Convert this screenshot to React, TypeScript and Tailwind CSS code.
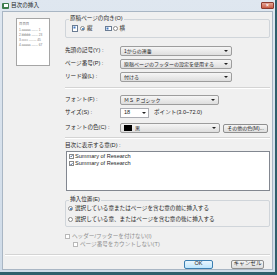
import React from "react";

const jp = "font-['Liberation_Sans','Noto_Sans_CJK_JP',sans-serif]";

function Combo({ text, w, swatch }: { text: string; w: string; swatch?: boolean }) {
  return (
    <div
      className={`flex h-[10px] items-center rounded-[2px] border border-[#9d9d9d] bg-gradient-to-b from-[#f6f6f6] to-[#dedede] pl-[3px] pr-[3px] ${w}`}
    >
      {swatch && <span className="mr-[3px] h-[6px] w-[8px] bg-black" />}
      <span className="flex-1 truncate text-[5px] leading-none">{text}</span>
      <span className="ml-[2px] h-0 w-0 border-x-[2px] border-t-[2px] border-x-transparent border-t-[#222]" />
    </div>
  );
}

function Radio({ on }: { on?: boolean }) {
  return (
    <span className="flex h-[5px] w-[5px] items-center justify-center rounded-full border border-[#8a8a8a] bg-white">
      {on && <span className="h-[2px] w-[2px] rounded-full bg-[#2a6bb0]" />}
    </span>
  );
}

function Check({ on, dim }: { on?: boolean; dim?: boolean }) {
  return (
    <span
      className={`flex h-[5px] w-[5px] items-center justify-center border bg-white ${
        dim ? "border-[#b8b8b8]" : "border-[#8a8a8a]"
      }`}
    >
      {on && (
        <svg width="4" height="4" viewBox="0 0 4 4">
          <path d="M0.5 2 L1.6 3.2 L3.6 0.6" stroke="#2b4f8c" strokeWidth="0.9" fill="none" />
        </svg>
      )}
    </span>
  );
}

function PageIcon({ wide }: { wide?: boolean }) {
  return (
    <svg width={wide ? 7 : 6} height={wide ? 5 : 7} viewBox={wide ? "0 0 7 5" : "0 0 6 7"}>
      <rect x="0.5" y="0.5" width={wide ? 6 : 5} height={wide ? 4 : 6} fill="#fff" stroke="#6a7c93" />
      <rect x="1.5" y="1.5" width="2" height="2" fill="#3f78c4" />
    </svg>
  );
}

function Row({ label, children }: { label: string; children: React.ReactNode }) {
  return (
    <div className="flex h-[10px] items-center">
      <span className="w-[55px] leading-none">{label}</span>
      {children}
    </div>
  );
}

export default function App() {
  return (
    <div className={`h-[275px] w-[277px] bg-[#2f5f6c] text-[5.6px] text-[#1e1e1e] ${jp}`}>
      <div className="flex h-[272px] w-[275px] flex-col bg-gradient-to-b from-[#dfe7f0] to-[#cfdbe8]">
        <div className="flex h-[11px] items-center pl-[2px]">
          <span className="flex h-[6px] w-[7px] items-center justify-center rounded-[1px] bg-[#3d7d4e]">
            <span className="h-[3px] w-[4px] bg-white" />
          </span>
          <span className="ml-[2px] text-[5.6px] leading-none text-[#222]">目次の挿入</span>
          <span className="ml-auto mr-[1px] flex h-[7px] w-[13px] items-center justify-center rounded-[1px] border border-[#8c3b30] bg-gradient-to-b from-[#e4a393] to-[#c75b44] text-[5px] font-bold leading-none text-white">
            ×
          </span>
        </div>
        <div className="mx-[2px] mb-[2px] flex flex-1 flex-col border border-[#a9b6c4] bg-[#f0f0f0]">
          <div className="flex">
            <div className="ml-[13px] mt-[6px] flex h-[48px] w-[34px] flex-col border border-[#a5a5a5] bg-white px-[2px] pt-[3px] text-[3.2px] leading-[5px] text-[#7a7a7a]">
              <span className="text-[3.4px]">目目目</span>
              <span className="mt-[1px]">1.aaaaa ------ 1</span>
              <span>2.bbbbb ------ 23</span>
              <span>3.cccc ------- 45</span>
              <span>4.aaaaa ------ 67</span>
            </div>
            <div className="ml-[15px] mr-[2px] flex flex-1 flex-col">
              <div className="relative mt-[7px] flex h-[19px] items-center rounded-[2px] border border-[#d0d5da] pl-[6px]">
                <span className="absolute -top-[4px] left-[3px] bg-[#f0f0f0] px-[1px] leading-none">
                  原稿ページの向き(O)
                </span>
                <PageIcon />
                <span className="ml-[2px]"><Radio on /></span>
                <span className="ml-[2px] leading-none">縦</span>
                <span className="ml-[12px]"><PageIcon wide /></span>
                <span className="ml-[1px]"><Radio /></span>
                <span className="ml-[2px] leading-none">横</span>
              </div>
              <div className="mt-[8px] flex flex-col gap-[3px]">
                <Row label="先頭の記号(Y) :">
                  <Combo text="1からの連番" w="w-[112px]" />
                </Row>
                <Row label="ページ番号(P) :">
                  <Combo text="原稿ページのフッターの設定を使用する" w="w-[112px]" />
                </Row>
                <Row label="リード線(L) :">
                  <Combo text="付ける" w="w-[112px]" />
                </Row>
              </div>
              <div className="mt-[5px] h-[2px] border-t border-b border-t-[#d4d4d4] border-b-white" />
              <div className="mt-[6px]">
                <Row label="フォント(F) :">
                  <Combo text="ＭＳ Ｐゴシック" w="w-[99px]" />
                </Row>
              </div>
              <div className="mt-[3px]">
                <Row label="サイズ(S) :">
                  <div className="flex h-[10px] w-[29px] items-center border border-[#abadb3] bg-white pl-[3px] pr-[2px]">
                    <span className="flex-1 leading-none">18</span>
                    <span className="h-0 w-0 border-x-[2px] border-t-[2px] border-x-transparent border-t-[#222]" />
                  </div>
                  <span className="ml-[5px] leading-none">ポイント(3.0~72.0)</span>
                </Row>
              </div>
              <div className="mt-[5px]">
                <Row label="フォントの色(C) :">
                  <Combo text="黒" w="w-[100px]" swatch />
                  <div className="ml-[3px] flex h-[9px] w-[45px] items-center justify-center rounded-[2px] border border-[#8f8f8f] bg-gradient-to-b from-[#f6f6f6] to-[#dddddd] text-[5px] leading-none">
                    その他の色(M)...
                  </div>
                </Row>
              </div>
              <div className="mt-[4px] h-[2px] border-t border-b border-t-[#d4d4d4] border-b-white" />
              <span className="mt-[4px] leading-none">目次に表示する章(D) :</span>
              <div className="ml-[1px] mt-[2px] flex h-[40px] flex-col gap-[2px] border border-[#828790] bg-white pl-[2px] pt-[2px]">
                <div className="flex items-center gap-[1px]">
                  <Check on />
                  <span className="leading-none">Summary of Research</span>
                </div>
                <div className="flex items-center gap-[1px]">
                  <Check on />
                  <span className="leading-none">Summary of Research</span>
                </div>
              </div>
              <div className="relative mt-[9px] flex h-[27px] flex-col justify-center gap-[5px] rounded-[2px] border border-[#d0d5da] pl-[2px] pt-[2px]">
                <span className="absolute -top-[4px] left-[3px] bg-[#f0f0f0] px-[1px] leading-none">
                  挿入位置(E)
                </span>
                <div className="flex items-center gap-[2px]">
                  <Radio on />
                  <span className="leading-none">選択している章またはページを含む章の前に挿入する</span>
                </div>
                <div className="flex items-center gap-[2px]">
                  <Radio />
                  <span className="leading-none">選択している章、またはページを含む章の後に挿入する</span>
                </div>
              </div>
              <div className="mt-[7px] flex items-center gap-[2px] text-[#8d8d8d]">
                <Check dim />
                <span className="leading-none">ヘッダー/フッターを付けない(I)</span>
              </div>
              <div className="ml-[8px] mt-[3px] flex items-center gap-[2px] text-[#8d8d8d]">
                <Check dim />
                <span className="leading-none">ページ番号をカウントしない(T)</span>
              </div>
            </div>
          </div>
          <div className="mx-[2px] mt-[6px] h-[2px] border-t border-b border-t-[#d4d4d4] border-b-white" />
          <div className="mr-[8px] mt-[4px] flex justify-end gap-[18px]">
            <div className="flex h-[9px] w-[29px] items-center justify-center rounded-[2px] border border-[#3c7fb1] bg-gradient-to-b from-[#eaf6fd] to-[#bee6fd] leading-none">
              OK
            </div>
            <div className="flex h-[9px] w-[33px] items-center justify-center rounded-[2px] border border-[#8f8f8f] bg-gradient-to-b from-[#f6f6f6] to-[#dddddd] leading-none">
              キャンセル
            </div>
          </div>
        </div>
      </div>
    </div>
  );
}
